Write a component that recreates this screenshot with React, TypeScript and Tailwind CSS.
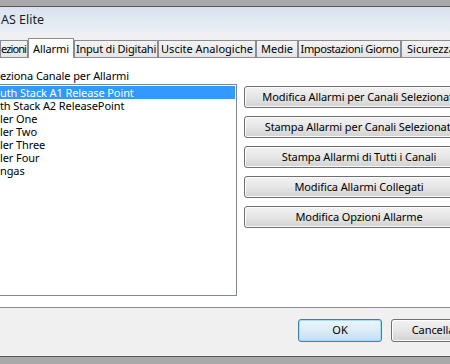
import React from "react";

const font = { fontFamily: '"Segoe UI", "Noto Sans", "Liberation Sans", sans-serif' };

const tabs = [
  { label: "ezioni", w: "w-[28px] justify-start tracking-[-0.9px]", selected: false },
  { label: "Allarmi", w: "w-[46px] justify-center", selected: true },
  { label: "Input di Digitahi", w: "w-[84px] justify-center tracking-[-0.2px]", selected: false },
  { label: "Uscite Analogiche", w: "w-[98px] justify-center", selected: false },
  { label: "Medie", w: "w-[42px] justify-center", selected: false },
  { label: "Impostazioni Giorno", w: "w-[103px] justify-center tracking-[-0.4px]", selected: false },
  { label: "Sicurezza", w: "w-[60px] justify-start pl-[5px]", selected: false },
];

const channels = [
  "uth Stack A1 Release Point",
  "th Stack A2 ReleasePoint",
  "ler One",
  "ler Two",
  "ler Three",
  "ler Four",
  "ngas",
];

const actions = [
  "Modifica Allarmi per Canali Selezionati",
  "Stampa Allarmi per Canali Selezionati",
  "Stampa Allarmi di Tutti i Canali",
  "Modifica Allarmi Collegati",
  "Modifica Opzioni Allarme",
];

function WinButton({ label, className = "" }: { label: string; className?: string }) {
  return (
    <div
      className={`h-[22px] shrink-0 rounded-[3px] border border-[#707070] bg-gradient-to-b from-[#f2f2f2] via-[#e6e6e6] to-[#d2d2d2] shadow-[inset_0_0_0_1px_#fcfcfc] flex items-center justify-center whitespace-nowrap overflow-hidden text-[11px] tracking-[-0.1px] text-black ${className}`}
    >
      {label}
    </div>
  );
}

export default function App() {
  return (
    <div className="w-[450px] h-[364px] bg-[#a9a9a9] pt-[6px] overflow-hidden" style={font}>
      <div className="h-[351px] bg-[#f0f0f0] border-t border-b border-[#5a5a5a] flex flex-col">
        {/* Title bar */}
        <div className="h-[26px] shrink-0 bg-gradient-to-b from-[#d8e2ee] to-[#ebf0f7] flex items-center pl-[1px] text-[12.5px] text-[#1e1e1e]">
          AS Elite
        </div>

        {/* Tabs */}
        <div className="mt-[5px] h-[20px] flex items-end relative z-10 whitespace-nowrap">
          {tabs.map((t) =>
            t.selected ? (
              <div
                key={t.label}
                className={`${t.w} h-[20px] shrink-0 bg-white border border-b-0 border-[#898c95] flex items-start pt-[3px] text-[11px] leading-[14px] tracking-[-0.1px]`}
              >
                {t.label}
              </div>
            ) : (
              <div
                key={t.label}
                className={`${t.w} h-[17px] shrink-0 mb-[1px] bg-gradient-to-b from-[#f3f3f3] to-[#e5e5e5] border border-b-0 border-[#898c95] flex items-center text-[11px] leading-[14px] overflow-hidden`}
              >
                {t.label}
              </div>
            )
          )}
        </div>

        {/* Tab panel */}
        <div className="-mt-px h-[251px] shrink-0 bg-white border-t border-b border-[#898c95] flex flex-col">
          <div className="mt-[11px] h-[14px] text-[11px] leading-[14px] tracking-[-0.1px] whitespace-nowrap">
            eziona Canale per Allarmi
          </div>
          <div className="mt-[1px] flex">
            <div className="w-[237px] shrink-0 h-[212px] border-t border-r border-b border-[#828790] pt-[1px] text-[11px] tracking-[-0.1px]">
              {channels.map((c, i) => (
                <div
                  key={c}
                  className={`h-[13px] leading-[13px] whitespace-nowrap ${
                    i === 0 ? "bg-[#3399ff] text-white mr-px" : "text-black"
                  }`}
                >
                  {c}
                </div>
              ))}
            </div>
            <div className="ml-[7px] pt-[2px] shrink-0 flex flex-col gap-[8px]">
              {actions.map((a) => (
                <WinButton key={a} label={a} className="w-[230px]" />
              ))}
            </div>
          </div>
        </div>

        {/* Dialog buttons */}
        <div className="mt-[11px] flex pl-[298px] gap-[9px]">
          <div className="w-[84px] h-[23px] shrink-0 rounded-[3px] border border-[#3c7fb1] bg-gradient-to-b from-[#eaf6fd] via-[#dcecf7] to-[#c4dcee] shadow-[inset_0_0_0_1px_#a8dcf5] flex items-center justify-center text-[11px]">
            OK
          </div>
          <WinButton label="Cancella" className="w-[84px] h-[23px]" />
        </div>
      </div>
    </div>
  );
}
